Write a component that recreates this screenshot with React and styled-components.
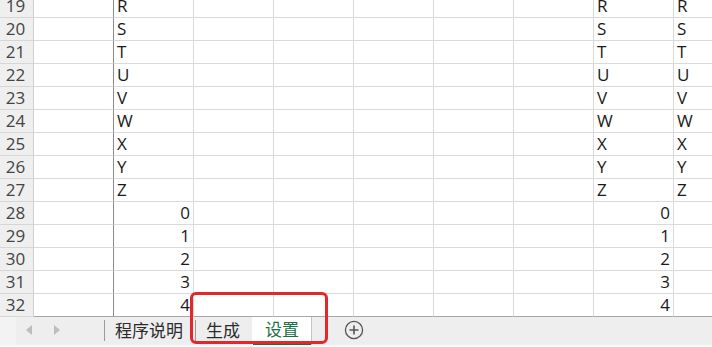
import React from 'react';
import styled, { createGlobalStyle } from 'styled-components';

const GlobalStyle = createGlobalStyle`
  html, body {
    margin: 0;
    padding: 0;
    background: #ffffff;
    overflow: hidden;
  }
  * {
    box-sizing: border-box;
  }
`;

const Page = styled.div`
  position: relative;
  width: 712px;
  height: 347px;
  overflow: hidden;
  display: flex;
  flex-direction: column;
  font-family: "Open Sans", "Noto Sans CJK SC", sans-serif;
`;

const Sheet = styled.div`
  height: 317px;
  overflow: hidden;
  flex-shrink: 0;
`;

const Grid = styled.div`
  margin-top: -5px;
  display: grid;
  grid-template-columns: 34px repeat(9, 80px);
  grid-auto-rows: 23px;
`;

const RowHead = styled.div`
  background: #efefef;
  border-right: 1px solid #d0d0d0;
  border-bottom: 1px solid #d6d6d6;
  color: #444;
  font-size: 17px;
  line-height: 22px;
  text-align: center;
  padding-right: 2px;
`;

const Cell = styled.div`
  border-right: 1px solid ${p => (p.$strong ? '#8c8c8c' : '#dadada')};
  border-bottom: 1px solid ${p => (p.$last ? '#a8a8a8' : '#dadada')};
  color: #1a1a1a;
  font-size: 17px;
  line-height: 22px;
  padding: 0 3px 0 3px;
  text-align: ${p => (p.$num ? 'right' : 'left')};
  white-space: nowrap;
  overflow: hidden;
`;

const TabBar = styled.div`
  height: 30px;
  background: #eeeeee;
  display: flex;
  align-items: stretch;
  border-bottom: 2px solid #f8f8f8;
`;

const NavArea = styled.div`
  width: 104px;
  display: flex;
  align-items: center;
  padding-left: 26px;
  padding-bottom: 3px;
  gap: 22px;
  background: linear-gradient(to right, #f3f3f3 16px, #eeeeee 16px);
`;

const Arrow = styled.span`
  width: 0;
  height: 0;
  border-top: 5px solid transparent;
  border-bottom: 5px solid transparent;
  ${p => (p.$dir === 'left'
    ? 'border-right: 6px solid #bdbdbd;'
    : 'border-left: 6px solid #bdbdbd;')}
`;

const Tab = styled.div`
  display: flex;
  align-items: center;
  justify-content: center;
  padding: 0 ${p => p.$right}px 0 ${p => p.$left}px;
  font-family: "Noto Sans CJK SC", sans-serif;
  font-size: 17px;
  color: ${p => (p.$active ? '#1e7145' : '#2b2b2b')};
  background: ${p => (p.$active ? '#ffffff' : 'transparent')};
  border-left: 1px solid ${p => (p.$sep ? '#9a9a9a' : 'transparent')};
  border-right: ${p => (p.$active ? '1px solid #c6c6c6' : 'none')};
  box-shadow: ${p => (p.$active ? 'inset 0 -3px 0 #1f6b43' : 'none')};
  margin: ${p => (p.$active ? '0' : '3px 0 4px')};
  padding-bottom: ${p => (p.$active ? 6 : 2)}px;
`;

const AddButton = styled.div`
  display: flex;
  align-items: center;
  padding-left: 32px;
  padding-bottom: 3px;
`;

const Highlight = styled.div`
  position: absolute;
  left: 190px;
  top: 292px;
  width: 138px;
  height: 52px;
  border: 3px solid #e5262a;
  border-radius: 6px;
  pointer-events: none;
`;

const letters = ['R', 'S', 'T', 'U', 'V', 'W', 'X', 'Y', 'Z'];
const rows = [];
for (let r = 19; r <= 32; r++) {
  const i = r - 19;
  if (i < letters.length) {
    rows.push({ r, b: letters[i], h: letters[i], i: letters[i], num: false });
  } else {
    const n = String(i - letters.length);
    rows.push({ r, b: n, h: n, i: null, num: true });
  }
}

function PlusIcon() {
  return (
    <svg width="20" height="20" viewBox="0 0 20 20">
      <circle cx="10" cy="10" r="8.6" fill="none" stroke="#555" strokeWidth="1.3" />
      <path d="M10 5.5v9M5.5 10h9" stroke="#555" strokeWidth="1.6" />
    </svg>
  );
}

export default function App() {
  return (
    <Page>
      <GlobalStyle />
      <Sheet>
        <Grid>
          {rows.map(row => {
            const last = row.r === 32;
            return (
              <React.Fragment key={row.r}>
                <RowHead>{row.r}</RowHead>
                <Cell $strong $last={last} />
                <Cell $num={row.num} $last={last}>{row.b}</Cell>
                <Cell $last={last} />
                <Cell $last={last} />
                <Cell $last={last} />
                <Cell $last={last} />
                <Cell $last={last} />
                <Cell $num={row.num} $last={last}>{row.h}</Cell>
                <Cell $last={last}>{row.i}</Cell>
              </React.Fragment>
            );
          })}
        </Grid>
      </Sheet>
      <TabBar>
        <NavArea>
          <Arrow $dir="left" />
          <Arrow $dir="right" />
        </NavArea>
        <Tab $sep $left={10} $right={12}>程序说明</Tab>
        <Tab $sep $left={10} $right={12}>生成</Tab>
        <Tab $active $left={12} $right={12}>设置</Tab>
        <AddButton>
          <PlusIcon />
        </AddButton>
      </TabBar>
      <Highlight />
    </Page>
  );
}
